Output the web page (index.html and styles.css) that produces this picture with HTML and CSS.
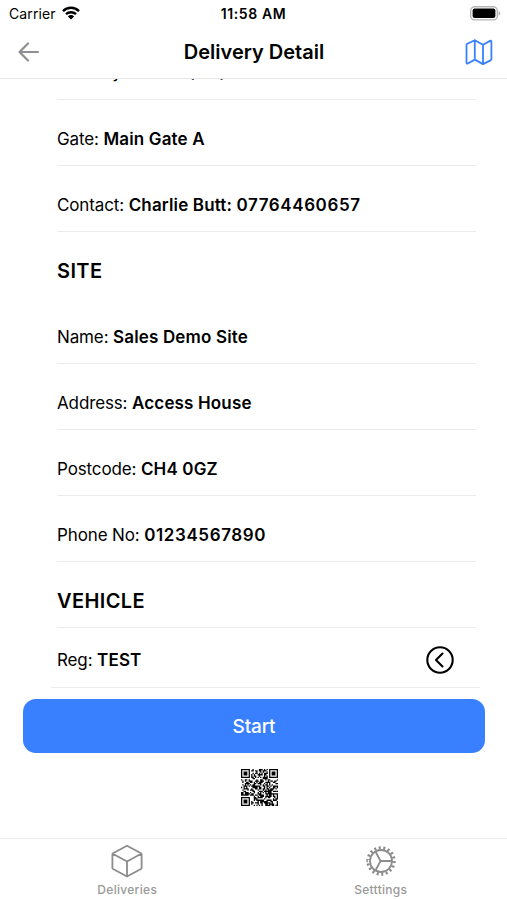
FILE: index.html
```
<!DOCTYPE html>
<html lang="en">
<head>
    <meta charset="utf-8">
    <title>Delivery Detail</title>
    <link rel="stylesheet" href="styles.css">
</head>
<body>
    <div class="status-bar">
        <div class="carrier">
            <span>Carrier</span>
            <svg width="18" height="14" viewBox="0 0 18 14">
                <g fill="none" stroke="#000" stroke-width="2.4">
                    <path d="M1 5.1a11.4 11.4 0 0 1 16 0"/>
                    <path d="M4 8.2a7.2 7.2 0 0 1 10 0"/>
                </g>
                <path d="M9 13.6L5.9 10.4a4.4 4.4 0 0 1 6.2 0z"/>
            </svg>
        </div>
        <div class="time">11:58 AM</div>
        <div class="battery">
            <svg width="31" height="15" viewBox="0 0 31 15">
                <rect x=".7" y=".7" width="26.6" height="13.2" rx="4" fill="#fff" stroke="#b5b5b5" stroke-width="1.4"/>
                <rect x="2.6" y="2.6" width="22.8" height="9.4" rx="2" fill="#000"/>
                <path d="M28.7 5c2 .8 2 3.9 0 4.7z" fill="#aaa"/>
            </svg>
        </div>
    </div>

    <header class="header">
        <svg class="back" width="24" height="24" viewBox="0 0 24 24">
            <path d="M11 3.500L2.500 12l8.500 8.500M2.500 12h18.500"/>
        </svg>
        <h1>Delivery Detail</h1>
        <svg class="map" width="28" height="28" viewBox="0 0 28 28">
            <path d="M9.800 2.200L2.300 5.800Q1.500 6.200 1.500 7v17.600q0 1.500 1.300.9l7-3.900 8.200 4.500 7.500-3.700q.9-.5.9-1.400V3.800q0-1.500-1.300-.9l-7.100 3.800zM9.800 2.200v19.400M18 6.700v19.400"/>
        </svg>
    </header>

    <main class="content">
        <div class="list">
            <div class="row first">Delivery Date: <b>21/07/2021</b></div>
            <div class="row">Gate: <b>Main Gate A</b></div>
            <div class="row">Contact: <b>Charlie Butt: <span class="number">07764460657</span></b></div>
            <h2 class="site">SITE</h2>
            <div class="row">Name: <b>Sales Demo Site</b></div>
            <div class="row">Address: <b>Access House</b></div>
            <div class="row">Postcode: <b>CH4 0GZ</b></div>
            <div class="row">Phone No: <b class="number">01234567890</b></div>
            <h2 class="vehicle">VEHICLE</h2>
        </div>
        <div class="reg">
            <span>Reg: <b>TEST</b></span>
            <svg width="28" height="28" viewBox="0 0 28 28">
                <circle cx="14" cy="14" r="12.700"/>
                <path d="M16.500 7.600L10 14l6.500 6.400"/>
            </svg>
        </div>
        <button class="start">Start</button>
        <svg class="qr" width="37" height="37" viewBox="0 0 29 29"><path id="qrPath"/></svg>
    </main>

    <nav class="tabs">
        <a class="tab">
            <svg width="34" height="34" viewBox="0 0 34 34">
                <path d="M17 1.800L31 9.300Q31.600 9.700 31.600 10.500V23.700Q31.600 24.600 30.900 25L17 32.500 3.100 25Q2.400 24.600 2.400 23.700V10.500Q2.400 9.700 3 9.300zM2.800 9.800L17 17.500 31.200 9.800M17 17.500V32"/>
            </svg>
            <span>Deliveries</span>
        </a>
        <a class="tab">
            <svg width="34" height="34" viewBox="0 0 34 34">
                <circle cx="17" cy="17" r="11"/>
                <circle class="teeth" cx="17" cy="17" r="13.200" pathLength="72"/>
                <path d="M16.500 17H28M16.500 17L11.500 7.500M16.500 17L11.500 26.500"/>
            </svg>
            <span>Setttings</span>
        </a>
    </nav>

    <script>
        const size = 29;
        let seed = 4217;
        let d = '';

        function finder(x, y) {
            const ring = Math.max(Math.abs(x - 3), Math.abs(y - 3));
            return ring === 3 || ring < 2;
        }

        for (let y = 0; y < size; y++) {
            for (let x = 0; x < size; x++) {
                seed = (seed * 16807) % 2147483647;
                let on = seed % 100 < 53;
                if (x < 8 && y < 8) on = finder(x, y);
                if (x > 20 && y < 8) on = finder(x - 22, y);
                if (x < 8 && y > 20) on = finder(x, y - 22);
                if (on) d += 'M' + x + ' ' + y + 'h1v1h-1z';
            }
        }
        document.getElementById('qrPath').setAttribute('d', d);
    </script>
</body>
</html>
```

FILE: styles.css
```
* {
    box-sizing: border-box;
}
body {
    margin: 0;
    height: 900px;
    display: flex;
    flex-direction: column;
    overflow: hidden;
    background: #fff;
    color: #000;
    font-family: Inter, "Liberation Sans", sans-serif;
    font-size: 17px;
}
svg {
    display: block;
    flex: none;
}
.status-bar {
    display: grid;
    grid-template-columns: 1fr auto 1fr;
    align-items: center;
    height: 26px;
    padding: 0 6px 0 9px;
    font-size: 14px;
}
.carrier {
    display: flex;
    align-items: center;
    gap: 6px;
    letter-spacing: .1px;
}
.time {
    margin-right: 3px;
    font-weight: 600;
    letter-spacing: .6px;
}
.battery {
    justify-self: end;
}
.header {
    display: flex;
    align-items: center;
    justify-content: space-between;
    height: 53px;
    padding: 0 14px 0 17px;
    border-bottom: 1px solid #e6e6e6;
}
.header h1 {
    margin: 0;
    padding-left: 2px;
    font-size: 20px;
    font-weight: 600;
}
.back,
.map {
    fill: none;
    stroke: #8e8e93;
    stroke-width: 2.2;
    stroke-linecap: round;
    stroke-linejoin: round;
}
.map {
    stroke: #3880ff;
    stroke-width: 1.8;
}
.content {
    flex: 1;
    min-height: 0;
    overflow: hidden;
}
.list {
    margin: 0 31px 0 57px;
}
.row {
    height: 66px;
    padding-top: 28px;
    border-bottom: 1px solid #ebebeb;
    line-height: 22px;
    letter-spacing: -.13px;
    white-space: nowrap;
}
.row.first {
    margin-top: -45px;
    padding-top: 27px;
}
b {
    font-weight: 600;
    letter-spacing: .15px;
}
.number,
.first b {
    letter-spacing: .6px;
}
h2 {
    margin: 0;
    font-size: 20px;
    font-weight: 600;
    line-height: 24px;
    letter-spacing: .4px;
}
.site {
    height: 66px;
    padding-top: 27px;
}
.vehicle {
    height: 66px;
    padding-top: 27px;
    border-bottom: 1px solid #ebebeb;
}
.reg {
    display: flex;
    align-items: center;
    justify-content: space-between;
    height: 60px;
    margin: 0 27px 0 51px;
    padding: 5px 26px 0 6px;
    border-bottom: 1px solid #ebebeb;
    letter-spacing: -.13px;
}
.reg svg {
    fill: none;
    stroke: #000;
    stroke-width: 2.1;
    stroke-linecap: round;
    stroke-linejoin: round;
}
.start {
    display: block;
    width: 462px;
    height: 54px;
    margin: 11px 0 0 23px;
    border: none;
    border-radius: 13px;
    background: #3880ff;
    color: #fff;
    font: 500 19px Inter, "Liberation Sans", sans-serif;
    letter-spacing: -.2px;
}
.qr {
    margin: 16px 0 0 241px;
}
.tabs {
    display: flex;
    height: 62px;
    border-top: 1px solid #ececec;
    color: #999;
    font-size: 12px;
    font-weight: 500;
    letter-spacing: .3px;
}
.tab {
    flex: 1;
    display: flex;
    flex-direction: column;
    align-items: center;
    padding: 5px 0 0 1px;
    line-height: 23px;
}
.tab svg {
    fill: none;
    stroke: #8c8c8c;
    stroke-width: 1.8;
    stroke-linejoin: round;
}
.tab .teeth {
    stroke-width: 3;
    stroke-dasharray: 1.8 2.2;
}
```
